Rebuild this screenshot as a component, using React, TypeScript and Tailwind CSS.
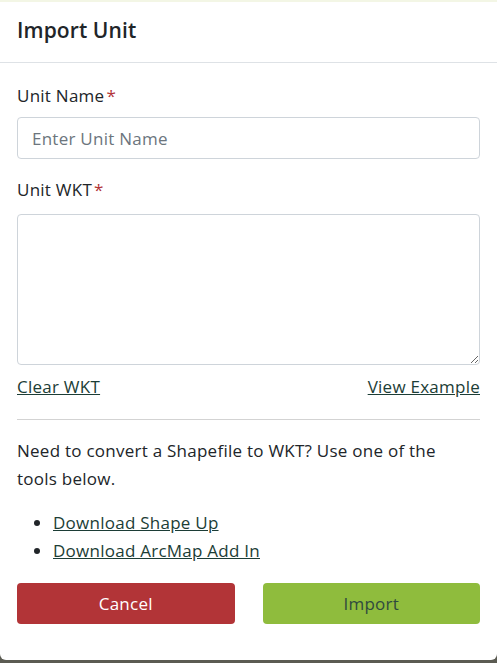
import React from 'react';

const ImportUnitModal: React.FC = () => {
  return (
    <div className="flex h-[663px] w-[497px] flex-col bg-[#5b5b52] font-['Open_Sans',sans-serif] text-[17px] tracking-[0.25px] text-[#212529]">
      <div className="h-[2px] bg-[#f3f6e5]" />
      <div className="flex flex-1 flex-col rounded-b-md bg-white">
        {/* Header */}
        <div className="flex h-[61px] items-center border-b border-[#dee2e6] px-[17px] pb-[4px]">
          <h2 className="text-[21px] font-semibold leading-none tracking-[0.1px]">Import Unit</h2>
        </div>

        {/* Body */}
        <div className="flex flex-col px-[17px] pt-[21px]">
          <label className="leading-6">
            Unit Name<span className="ml-[2px] text-[#b23437]">*</span>
          </label>
          <input
            className="mt-[9px] h-[42px] w-full rounded border border-[#ced4da] px-[14px] outline-none placeholder:text-[#6c757d]"
            placeholder="Enter Unit Name"
          />
          <label className="mt-[19px] leading-6">
            Unit WKT<span className="ml-[2px] text-[#b23437]">*</span>
          </label>
          <textarea className="mt-[12px] h-[151px] w-full rounded border border-[#ced4da] px-[14px] py-2 outline-none" />
          <div className="mt-[10px] flex justify-between leading-6">
            <a href="#" className="text-[#1c3d36] underline">Clear WKT</a>
            <a href="#" className="text-[#1c3d36] underline">View Example</a>
          </div>
          <hr className="mt-[20px] border-[#d3d3d3]" />
          <p className="mt-[17px] leading-[28px]">
            Need to convert a Shapefile to WKT? Use one of the tools below.
          </p>
          <ul className="mt-[16px] list-disc pl-[36px] leading-[28px]">
            <li><a href="#" className="text-[#1c3d36] underline">Download Shape Up</a></li>
            <li><a href="#" className="text-[#1c3d36] underline">Download ArcMap Add In</a></li>
          </ul>
          <div className="mt-[18px] grid grid-cols-2 gap-[28px]">
            <button className="h-[41px] rounded bg-[#b23437] text-white">Cancel</button>
            <button className="h-[41px] rounded bg-[#8fbc3d] text-[#2f4a3f]">Import</button>
          </div>
        </div>
      </div>
      <div className="h-[3px]" />
    </div>
  );
};

export default function App() {
  return <ImportUnitModal />;
}
